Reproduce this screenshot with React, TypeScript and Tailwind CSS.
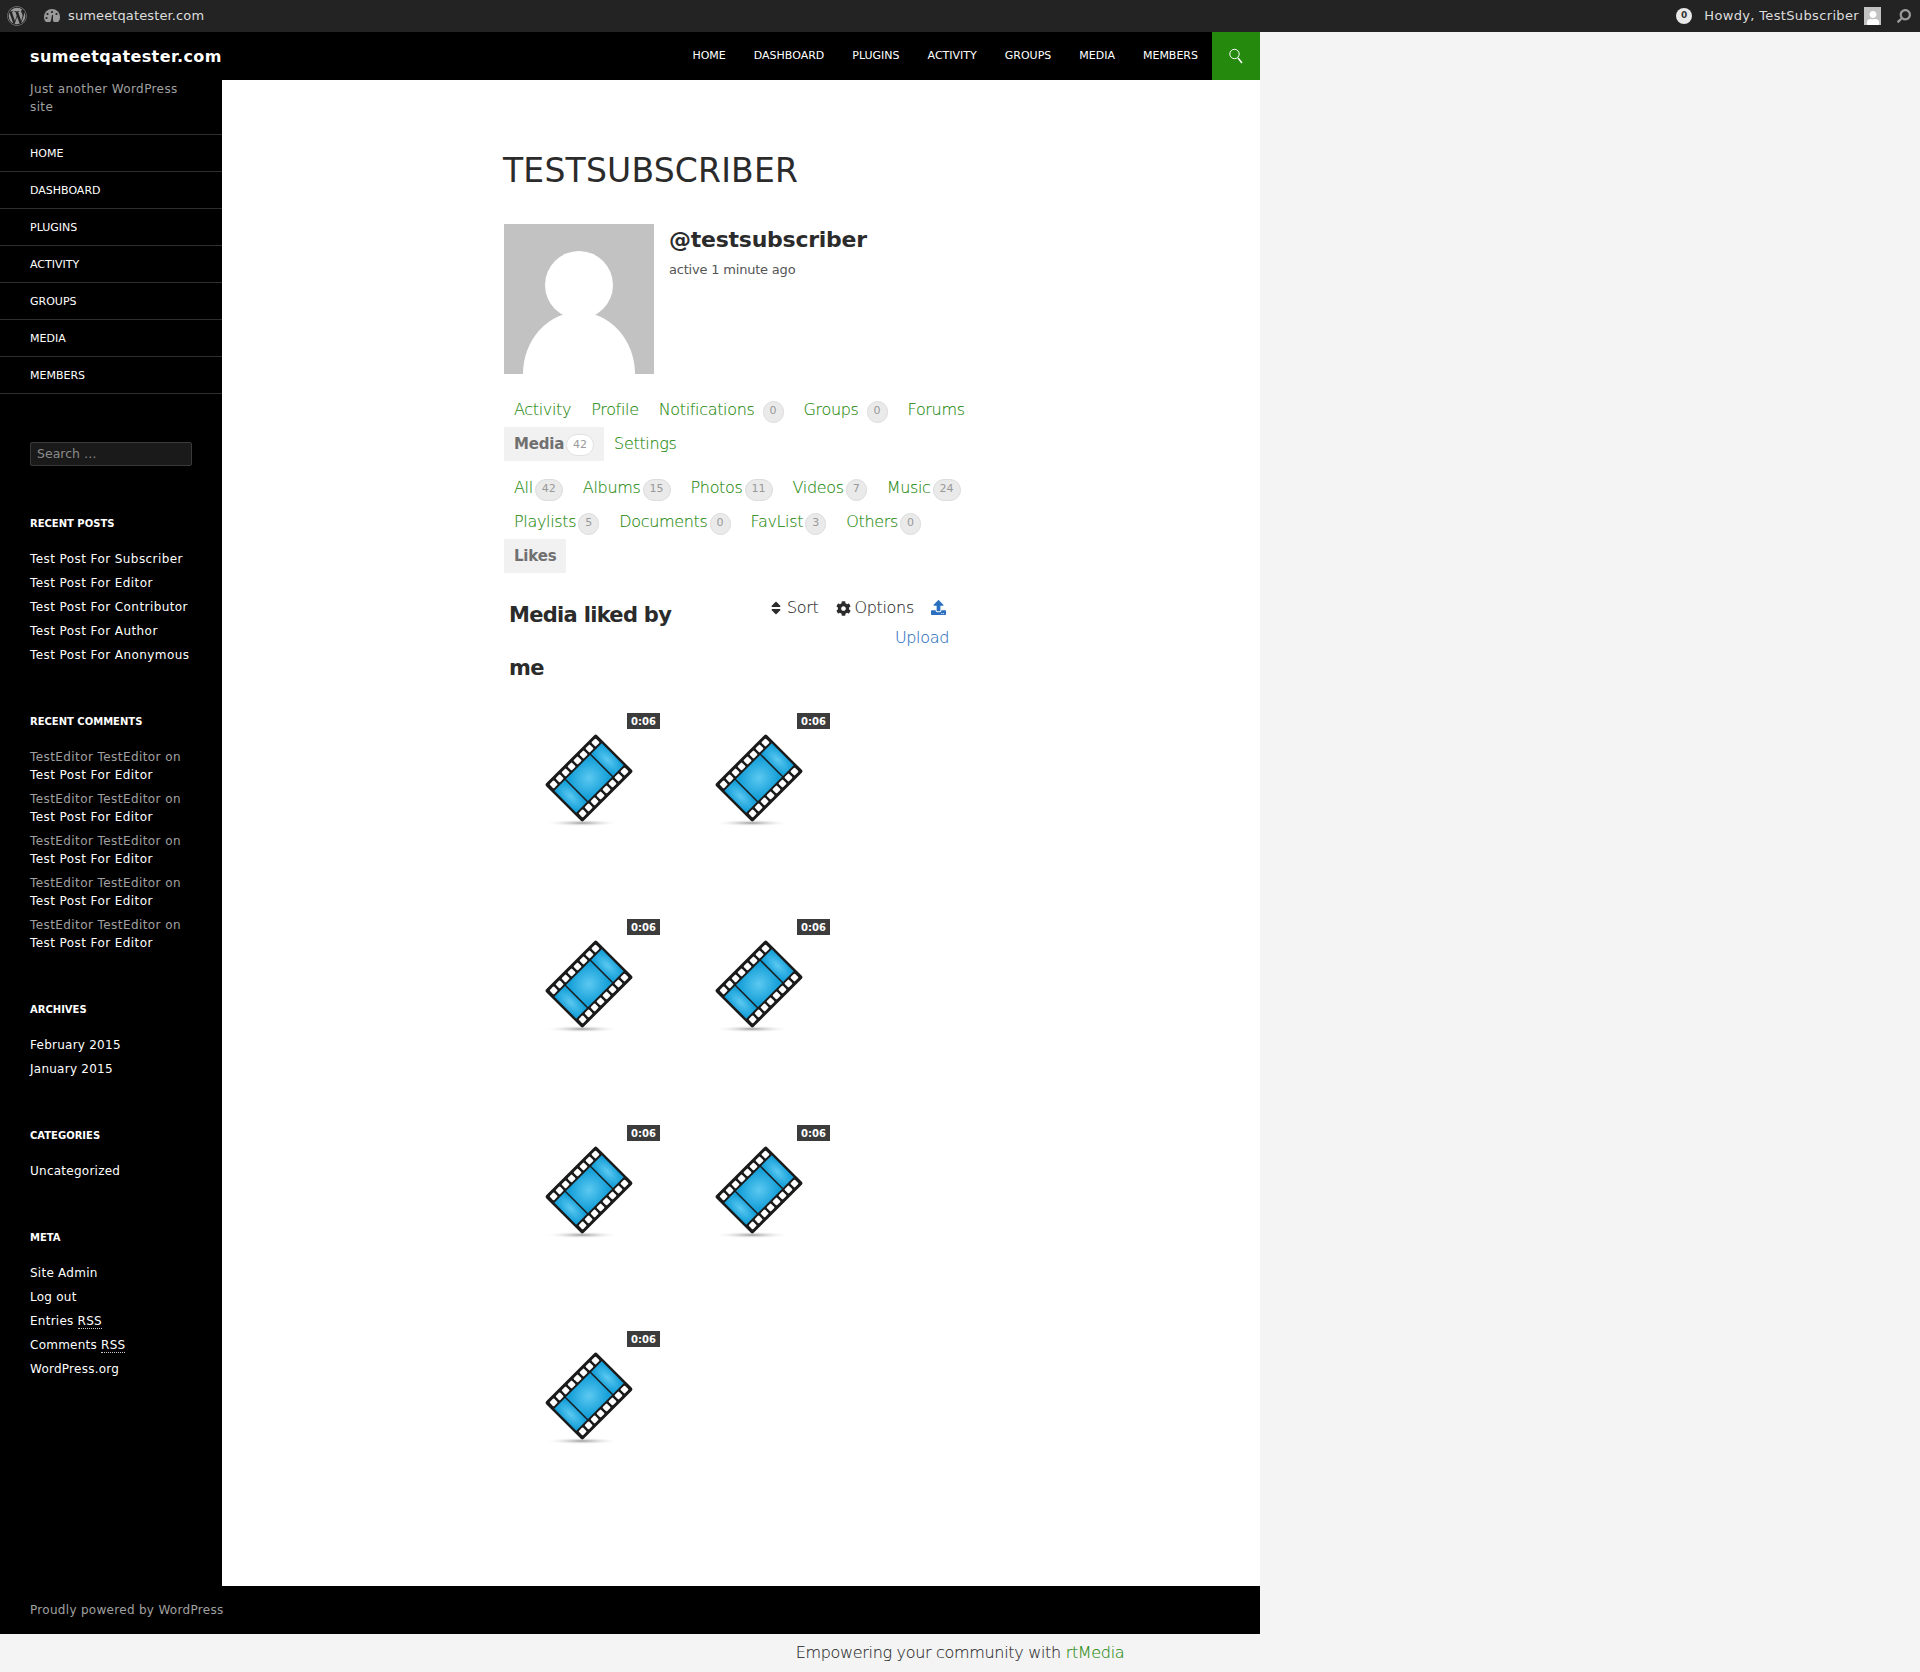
import { FaWordpress, FaSort, FaCog, FaUpload, FaSearch, FaUser } from 'react-icons/fa';

const menu = ['Home', 'Dashboard', 'Plugins', 'Activity', 'Groups', 'Media', 'Members'];
const posts = ['Subscriber', 'Editor', 'Contributor', 'Author', 'Anonymous'];

const Badge = ({ n, white }: { n: number; white?: boolean }) => (
  <span
    className={`inline-flex h-[22px] min-w-[21px] items-center justify-center rounded-full border px-[6px] text-[11px] font-normal tracking-normal text-[#999] [-webkit-text-stroke:0] ${
      white ? 'border-[#e2e2e2] bg-white' : 'border-[#dcdcdc] bg-[#eaeaea]'
    }`}
  >
    {n}
  </span>
);

const Tab = ({ label, count, gap, active }: { label: string; count?: number; gap?: string; active?: boolean }) => (
  <a
    className={`flex h-[34px] items-center px-[10px] ${
      active
        ? 'bg-[#f1f1f1] text-[15px] font-bold tracking-[-0.2px] text-[#707070]'
        : 'text-[16px] font-extralight tracking-[-0.33px] text-[#24890d] [-webkit-text-stroke:0.12px]'
    }`}
  >
    {label}
    {count !== undefined && (
      <span className={gap ?? 'ml-[2px]'}>
        <Badge n={count} white={active} />
      </span>
    )}
  </a>
);

const FilmIcon = () => (
  <svg width="100" height="100" viewBox="0 0 100 100" className="ml-[35px] mt-[34px]">
    <defs>
      <radialGradient id="blue" cx="50%" cy="50%" r="60%">
        <stop offset="0%" stopColor="#5cc9f1" />
        <stop offset="100%" stopColor="#16a0d9" />
      </radialGradient>
      <radialGradient id="shadow">
        <stop offset="0%" stopColor="#999" />
        <stop offset="100%" stopColor="#fff" stopOpacity="0" />
      </radialGradient>
    </defs>
    <ellipse cx="43" cy="95" rx="38" ry="3.5" fill="url(#shadow)" />
    <g transform="rotate(-45 50 50)">
      <rect x="14" y="23.5" width="72" height="53" rx="2" fill="#1a1a1a" />
      {[0, 1, 2, 3, 4, 5, 6, 7].map((i) => (
        <g key={i} fill="#fff">
          <rect x={17.5 + i * 8.45} y="26.5" width="6" height="6" rx="1" />
          <rect x={17.5 + i * 8.45} y="67.5" width="6" height="6" rx="1" />
        </g>
      ))}
      <rect x="16.5" y="34.5" width="15" height="31" fill="url(#blue)" />
      <rect x="33" y="34.5" width="34" height="31" fill="url(#blue)" />
      <rect x="68.5" y="34.5" width="15" height="31" fill="url(#blue)" />
    </g>
  </svg>
);

const Thumb = () => (
  <div className="relative h-[206px] w-[170px]">
    <span className="absolute right-[14px] top-[19px] flex h-[16px] w-[33px] items-center justify-center bg-[#3c3c3c] text-[10px] font-bold text-white">
      0:06
    </span>
    <FilmIcon />
  </div>
);

const Widget = ({ title, items, tight }: { title: string; items: React.ReactNode[]; tight?: boolean }) => (
  <div className="mb-[46px]">
    <h2 className="h-[18px] text-[10px] font-bold uppercase leading-[18px] text-white">{title}</h2>
    <ul className="mt-[14px]">
      {items.map((item, index) => (
        <li
          key={index}
          className={`h-[24px] text-[12px] leading-[24px] text-white ${tight ? 'tracking-[0.25px]' : 'tracking-[0.42px]'}`}
        >
          {item}
        </li>
      ))}
    </ul>
  </div>
);

const Rss = () => <abbr className="border-b border-dotted border-[#ccc] no-underline">RSS</abbr>;

export default function App() {
  return (
    <div className="min-h-[1672px] bg-[#f4f4f4] font-['DejaVu_Sans',sans-serif] text-[#2b2b2b]">
      {/* Admin bar */}
      <div className="flex h-[32px] items-center justify-between bg-[#232323] text-[13px] text-[#dddddd]">
        <div className="flex items-center">
          <FaWordpress size={20} className="ml-[7px] text-[#9a9a9a]" />
          <svg width="18" height="16" viewBox="0 0 18 16" className="ml-[16px]">
            <path
              d="M9 1a8 8 0 0 0-8 8c0 2 .7 4 2 5h12c1.300-1 2-3 2-5a8 8 0 0 0-8-8z"
              fill="#9a9a9a"
            />
            <circle cx="9" cy="4" r="1.100" fill="#232323" />
            <circle cx="4.500" cy="6" r="1.100" fill="#232323" />
            <circle cx="13.500" cy="6" r="1.100" fill="#232323" />
            <circle cx="3.500" cy="10" r="1.100" fill="#232323" />
            <path d="M8 12.500a1.500 1.500 0 1 0 2 0L10 7H9z" fill="#232323" />
          </svg>
          <span className="ml-[7px] tracking-[0.12px]">sumeetqatester.com</span>
        </div>
        <div className="flex items-center">
          <span className="flex h-[16px] w-[16px] items-center justify-center rounded-full bg-[#e8e8e8] text-[9px] font-bold text-[#333]">
            0
          </span>
          <span className="ml-[12px] tracking-[0.35px]">Howdy, TestSubscriber</span>
          <span className="ml-[5px] flex h-[18px] w-[17px] items-end justify-center overflow-hidden bg-[#c2c2c2]">
            <FaUser size={14} className="text-white" />
          </span>
          <FaSearch size={14} className="ml-[16px] mr-[9px] -scale-x-100 text-[#9a9a9a]" />
        </div>
      </div>

      <div className="w-[1260px] bg-black">
        {/* Header */}
        <div className="flex h-[48px] items-center justify-between">
          <a className="pl-[30px] pt-px text-[16px] font-bold tracking-[0.4px] text-white">sumeetqatester.com</a>
          <div className="flex h-full items-center">
            <nav className="flex pt-px">
              {menu.map((item) => (
                <a key={item} className="px-[14px] text-[11px] uppercase text-white">{item}</a>
              ))}
            </nav>
            <div className="flex h-full w-[48px] items-center justify-center bg-[#24890d]">
              <svg width="16" height="16" viewBox="0 0 16 16" fill="none" stroke="#fff">
                <circle cx="6.500" cy="6" r="4.700" strokeWidth="1" />
                <path d="M10 10l4 5" strokeWidth="1.500" />
              </svg>
            </div>
          </div>
        </div>

        <div className="flex">
          {/* Sidebar */}
          <aside className="w-[222px] shrink-0">
            <p className="h-[54px] px-[30px] text-[12px] leading-[18px] tracking-[0.39px] text-[#a0a0a0]">
              Just another WordPress site
            </p>
            <ul className="border-b border-[#2e2e2e]">
              {menu.map((item) => (
                <li key={item} className="flex h-[37px] items-center border-t border-[#2e2e2e] px-[30px] pt-[2px] text-[11px] uppercase text-white">
                  {item}
                </li>
              ))}
            </ul>
            <div className="px-[30px]">
              <div className="mt-[48px] flex h-[24px] w-[162px] items-center rounded-[2px] border border-[#3a3a3a] bg-[#1a1a1a] px-[6px] text-[12.5px] text-[#8a8a8a]">
                Search …
              </div>
              <div className="mt-[49px]">
                <Widget title="Recent Posts" items={posts.map((p) => `Test Post For ${p}`)} />
                <div className="mb-[49px]">
                  <h2 className="h-[18px] text-[10px] font-bold uppercase leading-[18px] text-white">Recent Comments</h2>
                  <ul className="mt-[17px]">
                    {[0, 1, 2, 3, 4].map((i) => (
                      <li key={i} className="mb-[6px] text-[12px] leading-[18px] tracking-[0.42px] text-[#a0a0a0]">
                        TestEditor TestEditor on <span className="text-white">Test Post For Editor</span>
                      </li>
                    ))}
                  </ul>
                </div>
                <Widget title="Archives" tight items={['February 2015', 'January 2015']} />
                <Widget title="Categories" tight items={['Uncategorized']} />
                <Widget
                  title="Meta"
                  tight
                  items={[
                    'Site Admin',
                    'Log out',
                    <>Entries <Rss /></>,
                    <>Comments <Rss /></>,
                    'WordPress.org',
                  ]}
                />
              </div>
            </div>
          </aside>

          {/* Main content */}
          <main className="h-[1506px] flex-1 bg-white pl-[281px]">
            <div className="w-[474px]">
              <h1 className="mt-[73px] h-[71px] text-[33px] font-normal uppercase leading-[36px] tracking-[0.2px]">Testsubscriber</h1>

              <div className="flex pl-px">
                <svg width="150" height="150" viewBox="0 0 150 150" className="shrink-0">
                  <rect width="150" height="150" fill="#c2c2c2" />
                  <ellipse cx="75" cy="150" rx="56" ry="62" fill="#fff" />
                  <circle cx="75" cy="61" r="34" fill="#fff" />
                </svg>
                <div className="ml-[15px]">
                  <div className="mt-[1px] text-[22px] font-bold leading-[30px] tracking-[-0.25px]">@testsubscriber</div>
                  <div className="mt-[5px] text-[13px] leading-[20px] tracking-[-0.2px] text-[#555]">active 1 minute ago</div>
                </div>
              </div>

              <nav className="mt-[19px] flex flex-wrap pl-px">
                <Tab label="Activity" />
                <Tab label="Profile" />
                <Tab label="Notifications" count={0} gap="ml-[8px]" />
                <Tab label="Groups" count={0} gap="ml-[8px]" />
                <Tab label="Forums" />
                <Tab label="Media" count={42} active gap="ml-[2px]" />
                <Tab label="Settings" />
              </nav>

              <nav className="mt-[10px] flex flex-wrap pl-px">
                <Tab label="All" count={42} />
                <Tab label="Albums" count={15} />
                <Tab label="Photos" count={11} />
                <Tab label="Videos" count={7} />
                <Tab label="Music" count={24} />
                <Tab label="Playlists" count={5} />
                <Tab label="Documents" count={0} />
                <Tab label="FavList" count={3} />
                <Tab label="Others" count={0} />
                <Tab label="Likes" active />
              </nav>

              <div className="mt-[15px] flex h-[106px] justify-between pl-[6px] pr-[28px]">
                <h2 className="w-[200px] pt-px text-[21px] font-bold leading-[53px] tracking-[-0.7px]">Media liked by me</h2>
                <div className="mt-[5px] flex text-[16px] font-extralight leading-[30px] tracking-[-0.33px] text-[#2b2b2b] [-webkit-text-stroke:0.12px]">
                  <span className="flex h-[30px] items-center">
                    <FaSort size={16} className="mr-[3px] text-[#2b2b2b]" />Sort
                  </span>
                  <span className="ml-[18px] flex h-[30px] items-center">
                    <FaCog size={15} className="mr-[3px] text-[#2b2b2b]" />Options
                  </span>
                  <span className="-ml-[19px] mt-[4px] flex flex-col items-end text-[#2a6fc0]">
                    <FaUpload size={15} className="mb-[11px] mr-[3px] mt-[3px]" />
                    <span className="leading-[24px]">Upload</span>
                  </span>
                </div>
              </div>

              <div className="grid grid-cols-[170px_170px] pl-px">
                {[0, 1, 2, 3, 4, 5, 6].map((i) => (
                  <Thumb key={i} />
                ))}
              </div>
            </div>
          </main>
        </div>

        {/* Footer */}
        <div className="flex h-[48px] items-center pl-[30px] text-[12px] tracking-[0.3px] text-[#a0a0a0]">Proudly powered by WordPress</div>
      </div>

      <div className="flex h-[38px] items-center justify-center text-[16px] font-extralight tracking-[-0.32px] text-[#2b2b2b] [-webkit-text-stroke:0.12px]">
        Empowering your community with&nbsp;<a className="text-[#24890d]">rtMedia</a>
      </div>
    </div>
  );
}
